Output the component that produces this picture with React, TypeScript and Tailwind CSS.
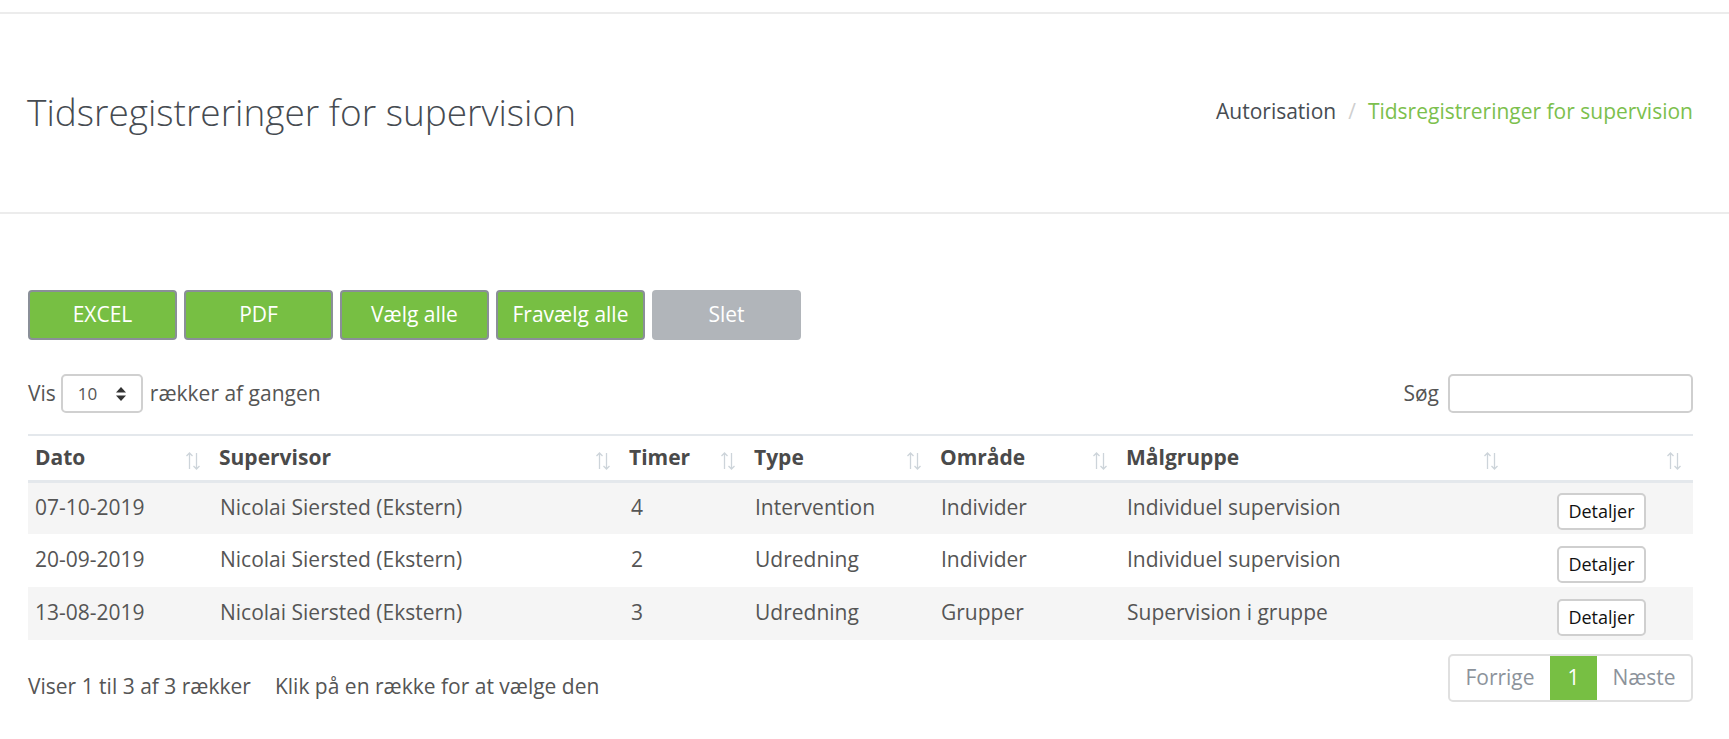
import { ChevronDown } from 'lucide-react';

interface Registration {
    dato: string;
    supervisor: string;
    timer: number;
    type: string;
    omraade: string;
    maalgruppe: string;
}

const rows: Registration[] = [
    { dato: '07-10-2019', supervisor: 'Nicolai Siersted (Ekstern)', timer: 4, type: 'Intervention', omraade: 'Individer', maalgruppe: 'Individuel supervision' },
    { dato: '20-09-2019', supervisor: 'Nicolai Siersted (Ekstern)', timer: 2, type: 'Udredning', omraade: 'Individer', maalgruppe: 'Individuel supervision' },
    { dato: '13-08-2019', supervisor: 'Nicolai Siersted (Ekstern)', timer: 3, type: 'Udredning', omraade: 'Grupper', maalgruppe: 'Supervision i gruppe' },
];

const columns = ['Dato', 'Supervisor', 'Timer', 'Type', 'Område', 'Målgruppe', ''];

function SortIcon() {
    return (
        <svg width="16" height="20" viewBox="0 0 16 20" fill="none" stroke="#cdd4da" strokeWidth="1.3" className="shrink-0">
            <path d="M4.5 2v16M1.5 5l3-3 3 3" />
            <path d="M11.5 2v16M8.5 15l3 3 3-3" />
        </svg>
    );
}

function SelectArrows() {
    return (
        <svg width="12" height="16" viewBox="0 0 12 16" fill="#333">
            <path d="M6 1l5 5.5H1z" />
            <path d="M6 15l5-5.5H1z" />
        </svg>
    );
}

export default function App() {
    const green = 'bg-[#77bf43] border-2 border-[#8a8f98] text-white';

    return (
        <div className="min-h-screen bg-white text-[#555] font-['Open_Sans','Liberation_Sans',sans-serif]">
            {/* Page header */}
            <div className="pt-[12px]">
                <div className="h-[202px] border-y-2 border-[#ececec] flex items-center justify-between pl-[27px] pr-[36px]">
                    <h1 className="text-[37px] font-light text-[#464b51] leading-none pb-[4px]">Tidsregistreringer for supervision</h1>
                    <div className="flex items-center text-[21px] pb-[2px]">
                        <span className="text-[#474c52]">Autorisation</span>
                        <span className="mx-[12px] text-[#cfcfcf]">/</span>
                        <span className="text-[#7cc04d]">Tidsregistreringer for supervision</span>
                    </div>
                </div>
            </div>

            <div className="pl-[28px] pr-[36px] pt-[76px]">
                {/* Toolbar */}
                <div className="flex gap-[7px]">
                    <button className={`w-[149px] h-[50px] rounded-[4px] text-[21px] ${green}`}>EXCEL</button>
                    <button className={`w-[149px] h-[50px] rounded-[4px] text-[21px] ${green}`}>PDF</button>
                    <button className={`w-[149px] h-[50px] rounded-[4px] text-[21px] ${green}`}>Vælg alle</button>
                    <button className={`w-[149px] h-[50px] rounded-[4px] text-[21px] ${green}`}>Fravælg alle</button>
                    <button className="w-[149px] h-[50px] rounded-[4px] text-[21px] bg-[#b1b5ba] text-white">Slet</button>
                </div>

                {/* Length + search */}
                <div className="flex items-center justify-between mt-[34px] h-[39px]">
                    <div className="flex items-center text-[21px]">
                        <span>Vis</span>
                        <div className="ml-[5px] mr-[7px] w-[82px] h-[39px] border-2 border-[#d0d0d0] rounded-[5px] flex items-center justify-between pl-[15px] pr-[14px]">
                            <span className="text-[17px] text-[#555]">10</span>
                            <SelectArrows />
                        </div>
                        <span>rækker af gangen</span>
                    </div>
                    <div className="flex items-center text-[21px]">
                        <span className="mr-[9px]">Søg</span>
                        <input className="w-[245px] h-[39px] border-2 border-[#cfcfcf] rounded-[5px] outline-none px-2" />
                    </div>
                </div>

                {/* Table */}
                <table className="w-full table-fixed border-collapse mt-[21px] text-[21px]">
                    <colgroup>
                        <col className="w-[184px]" />
                        <col className="w-[410px]" />
                        <col className="w-[125px]" />
                        <col className="w-[186px]" />
                        <col className="w-[186px]" />
                        <col className="w-[391px]" />
                        <col className="w-[183px]" />
                    </colgroup>
                    <thead>
                        <tr className="border-t-2 border-b-[3px] border-[#e4e8ec]">
                            {columns.map((c, i) => (
                                <th key={i} className="h-[46px] pl-[7px] pr-[11px] text-left font-bold text-[#4a4a4a]">
                                    <div className="flex items-center justify-between">
                                        <span>{c}</span>
                                        <span className="pt-[6px]"><SortIcon /></span>
                                    </div>
                                </th>
                            ))}
                        </tr>
                    </thead>
                    <tbody>
                        {rows.map((r, i) => (
                            <tr key={i} className={i % 2 === 0 ? 'bg-[#f5f5f5]' : 'bg-white'}>
                                <td className="h-[53px] pl-[7px] pb-[2px]">{r.dato}</td>
                                <td className="pl-[8px] pb-[2px]">{r.supervisor}</td>
                                <td className="pl-[9px] pb-[2px]">{r.timer}</td>
                                <td className="pl-[8px] pb-[2px]">{r.type}</td>
                                <td className="pl-[8px] pb-[2px]">{r.omraade}</td>
                                <td className="pl-[8px] pb-[2px]">{r.maalgruppe}</td>
                                <td className="text-center">
                                    <button className="w-[89px] h-[37px] mt-[7px] bg-white border-2 border-[#cfcfcf] rounded-[5px] text-[18px] text-[#111]">Detaljer</button>
                                </td>
                            </tr>
                        ))}
                    </tbody>
                </table>

                {/* Footer */}
                <div className="flex justify-between items-start mt-[14px]">
                    <div className="flex gap-[24px] text-[21px] pt-[17px]">
                        <span>Viser 1 til 3 af 3 rækker</span>
                        <span>Klik på en række for at vælge den</span>
                    </div>
                    <div className="flex h-[48px] border-2 border-[#e0e0e0] rounded-[5px] overflow-hidden text-[21px]">
                        <span className="w-[100px] flex items-center justify-center text-[#8c939b]">Forrige</span>
                        <span className="w-[47px] flex items-center justify-center bg-[#77bf43] text-white">1</span>
                        <span className="w-[94px] flex items-center justify-center text-[#8c939b]">Næste</span>
                    </div>
                </div>
            </div>
        </div>
    );
}
